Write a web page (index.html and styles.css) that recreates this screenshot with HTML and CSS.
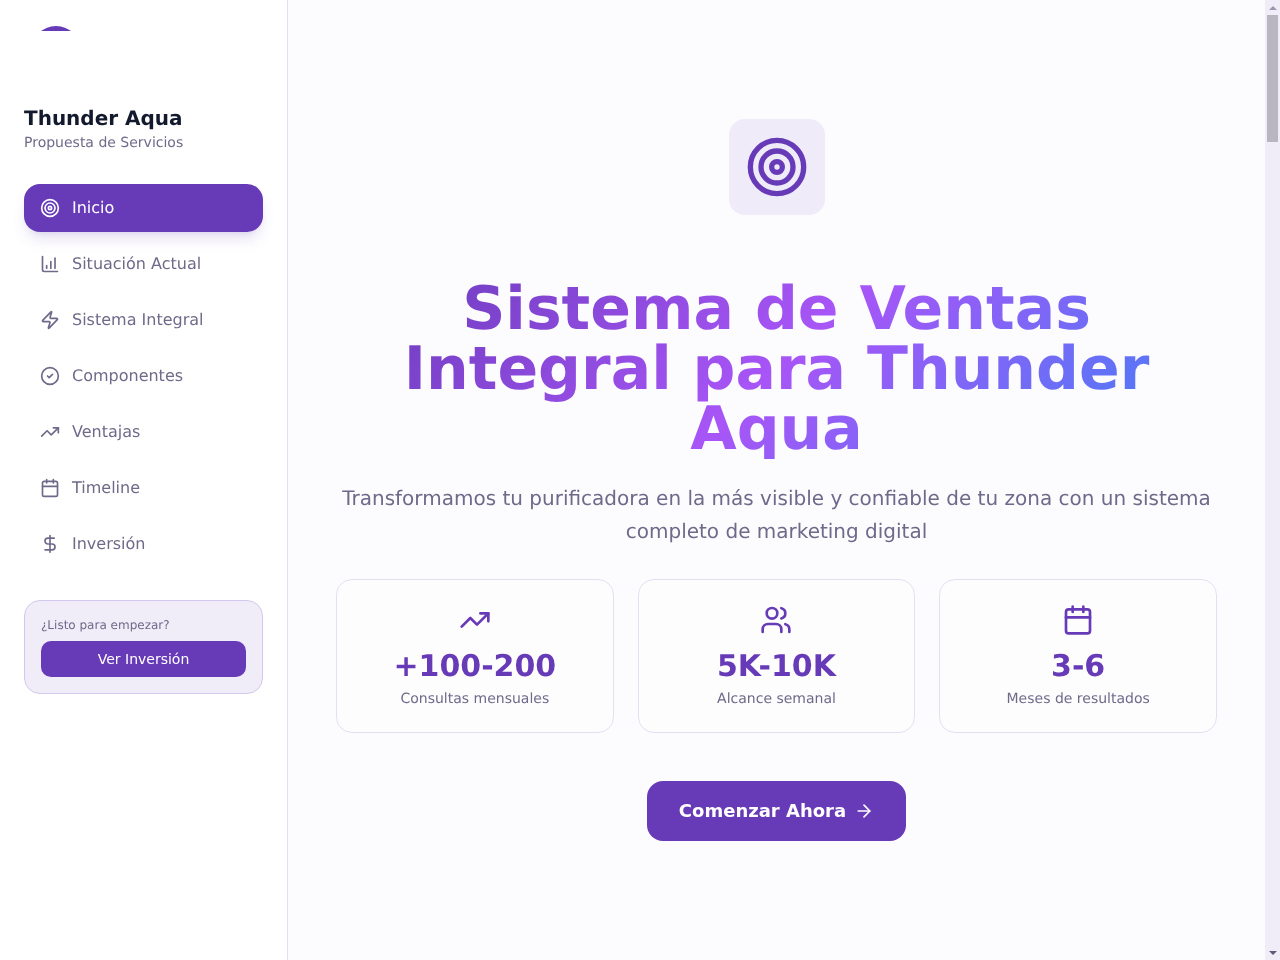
FILE: index.html
```html
<!DOCTYPE html>
<html lang="en">
<head>
    <meta charset="UTF-8">
    <meta name="viewport" content="width=device-width, initial-scale=1.0">
    <title>Thunder Aqua</title>
    <link rel="stylesheet" href="styles.css">
</head>
<body>

<div class="layout">
    <!-- Sidebar -->
    <aside class="sidebar">
        <div class="logo">
            <div class="logo-clip">
                <svg class="logo-img" width="64" height="64" viewBox="0 0 64 64">
                    <circle cx="32" cy="27" r="25" fill="#673ab7"/>
                </svg>
            </div>
        </div>
        <h2 class="brand">Thunder Aqua</h2>
        <p class="brand-sub">Propuesta de Servicios</p>

        <nav class="nav">
            <a class="nav-item active">
                <svg class="nav-icon" viewBox="0 0 24 24"><circle cx="12" cy="12" r="10"/><circle cx="12" cy="12" r="6"/><circle cx="12" cy="12" r="2"/></svg>
                <span class="nav-label">Inicio</span>
            </a>
            <a class="nav-item">
                <svg class="nav-icon" viewBox="0 0 24 24"><path d="M3 3v16a2 2 0 0 0 2 2h16"/><path d="M8 17v-3"/><path d="M13 17V9"/><path d="M18 17V5"/></svg>
                <span class="nav-label">Situación Actual</span>
            </a>
            <a class="nav-item">
                <svg class="nav-icon" viewBox="0 0 24 24"><path d="M4 14a1 1 0 0 1-.78-1.63l9.9-10.2a.5.5 0 0 1 .86.46l-1.92 6.02A1 1 0 0 0 13 10h7a1 1 0 0 1 .78 1.63l-9.9 10.2a.5.5 0 0 1-.86-.46l1.92-6.02A1 1 0 0 0 11 14z"/></svg>
                <span class="nav-label">Sistema Integral</span>
            </a>
            <a class="nav-item">
                <svg class="nav-icon" viewBox="0 0 24 24"><circle cx="12" cy="12" r="10"/><path d="m9 12 2 2 4-4"/></svg>
                <span class="nav-label">Componentes</span>
            </a>
            <a class="nav-item">
                <svg class="nav-icon" viewBox="0 0 24 24"><path d="M16 7h6v6"/><path d="m22 7-8.5 8.5-5-5L2 17"/></svg>
                <span class="nav-label">Ventajas</span>
            </a>
            <a class="nav-item">
                <svg class="nav-icon" viewBox="0 0 24 24"><path d="M8 2v4"/><path d="M16 2v4"/><rect x="3" y="4" width="18" height="18" rx="2"/><path d="M3 10h18"/></svg>
                <span class="nav-label">Timeline</span>
            </a>
            <a class="nav-item">
                <svg class="nav-icon" viewBox="0 0 24 24"><line x1="12" y1="2" x2="12" y2="22"/><path d="M17 5H9.5a3.5 3.5 0 0 0 0 7h5a3.5 3.5 0 0 1 0 7H6"/></svg>
                <span class="nav-label">Inversión</span>
            </a>
        </nav>

        <div class="side-cta">
            <p class="side-cta-text">¿Listo para empezar?</p>
            <button class="side-cta-btn">Ver Inversión</button>
        </div>
    </aside>

    <!-- Main content -->
    <main class="main">
        <section class="hero">
            <div class="hero-icon">
                <svg width="64" height="64" viewBox="0 0 24 24"><circle cx="12" cy="12" r="10"/><circle cx="12" cy="12" r="6"/><circle cx="12" cy="12" r="2"/></svg>
            </div>
            <h1 class="hero-title">Sistema de Ventas Integral para Thunder Aqua</h1>
            <p class="hero-sub">Transformamos tu purificadora en la más visible y confiable de tu zona con un sistema completo de marketing digital</p>

            <div class="stats">
                <div class="stat-card">
                    <svg class="stat-icon" viewBox="0 0 24 24"><path d="M16 7h6v6"/><path d="m22 7-8.5 8.5-5-5L2 17"/></svg>
                    <div class="stat-value">+100-200</div>
                    <div class="stat-label">Consultas mensuales</div>
                </div>
                <div class="stat-card">
                    <svg class="stat-icon" viewBox="0 0 24 24"><path d="M16 21v-2a4 4 0 0 0-4-4H6a4 4 0 0 0-4 4v2"/><path d="M16 3.128a4 4 0 0 1 0 7.744"/><path d="M22 21v-2a4 4 0 0 0-3-3.87"/><circle cx="9" cy="7" r="4"/></svg>
                    <div class="stat-value">5K-10K</div>
                    <div class="stat-label">Alcance semanal</div>
                </div>
                <div class="stat-card">
                    <svg class="stat-icon" viewBox="0 0 24 24"><path d="M8 2v4"/><path d="M16 2v4"/><rect x="3" y="4" width="18" height="18" rx="2"/><path d="M3 10h18"/></svg>
                    <div class="stat-value">3-6</div>
                    <div class="stat-label">Meses de resultados</div>
                </div>
            </div>

            <button class="start-btn">
                <span class="start-label">Comenzar Ahora</span>
                <svg class="start-arrow" viewBox="0 0 24 24"><path d="M5 12h14"/><path d="m12 5 7 7-7 7"/></svg>
            </button>
        </section>
    </main>

    <!-- Page scrollbar as it appears in the shot -->
    <div class="scrollbar">
        <span class="scroll-btn"><i class="arrow-up"></i></span>
        <span class="scroll-thumb"></span>
        <span class="scroll-space"></span>
        <span class="scroll-btn"><i class="arrow-down"></i></span>
    </div>
</div>

</body>
</html>
```

FILE: styles.css
```css
* {
    box-sizing: border-box;
    margin: 0;
    padding: 0;
}

body {
    font-family: 'DejaVu Sans', sans-serif;
    background-color: #fcfbfd;
    color: #141a2e;
    text-rendering: geometricPrecision;
}

svg {
    fill: none;
    stroke: currentColor;
    stroke-width: 2;
    stroke-linecap: round;
    stroke-linejoin: round;
}

.layout {
    display: flex;
    height: 100vh;
    overflow: hidden;
    will-change: transform;
}

/* Sidebar */
.sidebar {
    flex: 0 0 288px;
    padding: 24px;
    background-color: #fff;
    border-right: 1px solid #e4e0f0;
}

.logo {
    height: 84px;
}

.logo-clip {
    height: 7px;
    overflow: hidden;
}

.logo-img {
    display: block;
    stroke: none;
}

.brand {
    font-size: 20px;
    line-height: 20px;
    font-weight: 700;
    color: #141a2e;
}

.brand-sub {
    font-size: 14px;
    line-height: 20px;
    margin-top: 5px;
    color: #6f6a8a;
}

.nav {
    display: flex;
    flex-direction: column;
    gap: 8px;
    margin-top: 31px;
}

.nav-item {
    display: flex;
    align-items: center;
    gap: 12px;
    height: 48px;
    padding: 0 16px;
    font-size: 16px;
    color: #6f6a8a;
    border-radius: 16px;
}

.nav-item.active {
    background-color: #673ab7;
    color: #fff;
    box-shadow: 0 10px 15px -3px rgba(103, 58, 183, 0.15), 0 4px 6px -4px rgba(103, 58, 183, 0.15);
}

.nav-icon {
    width: 20px;
    height: 20px;
    flex-shrink: 0;
}

.nav-label {
    padding-bottom: 2px;
}

.side-cta {
    margin-top: 32px;
    padding: 16px;
    background-color: #f0edf8;
    border: 1px solid #d3c9ec;
    border-radius: 16px;
}

.side-cta-text {
    font-size: 12px;
    line-height: 16px;
    margin-bottom: 8px;
    color: #6f6a8a;
}

.side-cta-btn {
    display: block;
    width: 100%;
    height: 36px;
    font-family: inherit;
    font-size: 14px;
    color: #fff;
    background-color: #673ab7;
    border: none;
    border-radius: 10px;
}

/* Main */
.main {
    flex: 1;
    min-width: 0;
}

.hero {
    display: flex;
    flex-direction: column;
    align-items: center;
    justify-content: center;
    min-height: 100vh;
    padding: 48px;
    text-align: center;
}

.hero-icon {
    display: flex;
    align-items: center;
    justify-content: center;
    width: 96px;
    height: 96px;
    margin-bottom: 64px;
    color: #673ab7;
    background-color: #efebf8;
    border-radius: 16px;
}

.hero-title {
    width: 100%;
    font-size: 60px;
    line-height: 60px;
    font-weight: 700;
    margin-bottom: 23px;
    background: linear-gradient(135deg, #673ab7, #a855f7, #3b82f6);
    -webkit-background-clip: text;
    background-clip: text;
    color: transparent;
}

.hero-sub {
    font-size: 20px;
    line-height: 32.5px;
    margin-bottom: 32px;
    color: #6f6a8a;
}

.stats {
    display: grid;
    grid-template-columns: repeat(3, 1fr);
    gap: 24px;
    width: 100%;
    margin-bottom: 48px;
}

.stat-card {
    padding: 24px 24px 23px;
    background-color: #fefdfe;
    border: 1px solid #e4e0f0;
    border-radius: 16px;
}

.stat-icon {
    display: block;
    width: 32px;
    height: 32px;
    margin: 0 auto 13px;
    color: #673ab7;
}

.stat-value {
    font-size: 30px;
    line-height: 36px;
    font-weight: 700;
    margin-bottom: 4px;
    color: #673ab7;
}

.stat-label {
    font-size: 14px;
    line-height: 20px;
    color: #6f6a8a;
}

.start-btn {
    display: flex;
    align-items: center;
    gap: 8px;
    height: 60px;
    padding: 0 32px;
    font-family: inherit;
    font-size: 18px;
    font-weight: 700;
    color: #fff;
    background-color: #673ab7;
    border: none;
    border-radius: 16px;
}

.start-label {
    padding-bottom: 2px;
}

.start-arrow {
    width: 20px;
    height: 20px;
}

/* Scrollbar */
.scrollbar {
    flex: 0 0 15px;
    display: flex;
    flex-direction: column;
    background-color: #f0edf8;
}

.scroll-btn {
    display: flex;
    align-items: center;
    justify-content: center;
    height: 15px;
}

.arrow-up {
    border-left: 4px solid transparent;
    border-right: 4px solid transparent;
    border-bottom: 4px solid #9b97ad;
}

.arrow-down {
    border-left: 4px solid transparent;
    border-right: 4px solid transparent;
    border-top: 4px solid #5f5a7a;
}

.scroll-thumb {
    height: 127px;
    margin: 0 2px;
    background-color: #b9b6c2;
}

.scroll-space {
    flex: 1;
}
```
